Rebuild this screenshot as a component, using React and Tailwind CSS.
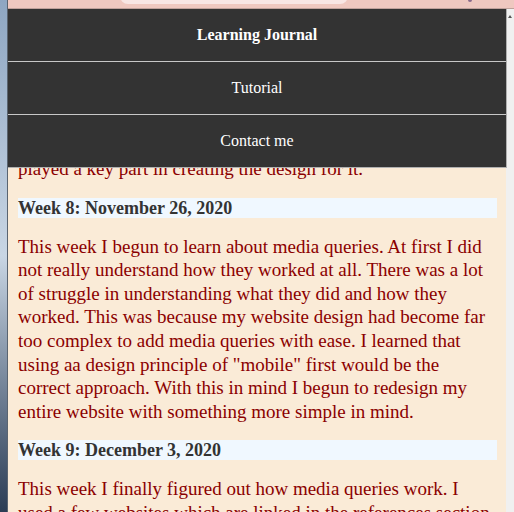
import React from 'react';

const navItems = [
  { label: 'Learning Journal', active: true },
  { label: 'Tutorial', active: false },
  { label: 'Contact me', active: false },
];

// lines kept as they wrap on the page
const entries = [
  {
    title: 'Week 8: November 26, 2020',
    lines: [
      'This week I begun to learn about media queries. At first I did',
      'not really understand how they worked at all. There was a lot',
      'of struggle in understanding what they did and how they',
      'worked. This was because my website design had become far',
      'too complex to add media queries with ease. I learned that',
      'using aa design principle of "mobile" first would be the',
      'correct approach. With this in mind I begun to redesign my',
      'entire website with something more simple in mind.',
    ],
  },
  {
    title: 'Week 9: December 3, 2020',
    lines: [
      'This week I finally figured out how media queries work. I',
      'used a few websites which are linked in the references section',
      'to help me understand how they should be written.',
    ],
  },
];

export default function App() {
  return (
    <div className="w-[514px] h-[512px] flex overflow-hidden bg-[#f0f0f0] font-['Liberation_Serif',serif]">
      {/* desktop wallpaper peeking on the left */}
      <div className="w-[8px] h-full shrink-0 border-r border-[#5a6470] bg-gradient-to-b from-[#8ea6c2] via-[#c9d6e4] to-[#2c3d55]" />

      <div className="flex-1 flex flex-col min-w-0">
        {/* browser top strip */}
        <div className="h-[9px] shrink-0 relative bg-[#efc8c0] border-b border-[#bfa19b] overflow-hidden">
          <div className="absolute left-[112px] top-[-12px] w-[228px] h-[16px] rounded-full bg-[#f8e6e4]" />
          <div className="absolute left-[460px] top-[-2px] w-[4px] h-[4px] rounded-sm bg-[#8a6a8a]" />
        </div>

        <div className="flex-1 flex relative min-h-0">
          {/* page content */}
          <div className="flex-1 bg-[#faebd7] pl-[10px] pr-[9px] overflow-hidden">
            <p className="mt-[148px] text-[19px] leading-[23.6px] text-[#8b0000]">
              played a key part in creating the design for it.
            </p>
            {entries.map((e) => (
              <div key={e.title}>
                <h3 className="mt-[17px] bg-[#f0f8ff] text-[18px] leading-[20px] font-bold text-[#333]">
                  {e.title}
                </h3>
                <p className="mt-[17px] text-[19px] leading-[23.6px] text-[#8b0000] whitespace-nowrap">
                  {e.lines.map((l) => (
                    <span key={l} className="block">
                      {l}
                    </span>
                  ))}
                </p>
              </div>
            ))}
          </div>

          {/* scrollbar */}
          <div className="w-[8px] shrink-0 bg-[#f0f0f0] flex justify-center pt-[6px]">
            <div className="w-0 h-0 border-l-[2px] border-r-[2px] border-b-[3px] border-l-transparent border-r-transparent border-b-[#555]" />
          </div>

          {/* fixed nav overlay */}
          <nav className="absolute left-0 top-0 w-[499px] bg-[#333] border-r border-b border-[#b0b0b0] flex flex-col">
            {navItems.map((item, i) => (
              <div
                key={item.label}
                className={`flex items-center justify-center text-white text-[16px] ${
                  i > 0 ? 'border-t border-[#c8c8c8] h-[53px]' : 'h-[52px]'
                } ${item.active ? 'font-bold' : ''}`}
              >
                {item.label}
              </div>
            ))}
          </nav>
        </div>
      </div>
    </div>
  );
}
